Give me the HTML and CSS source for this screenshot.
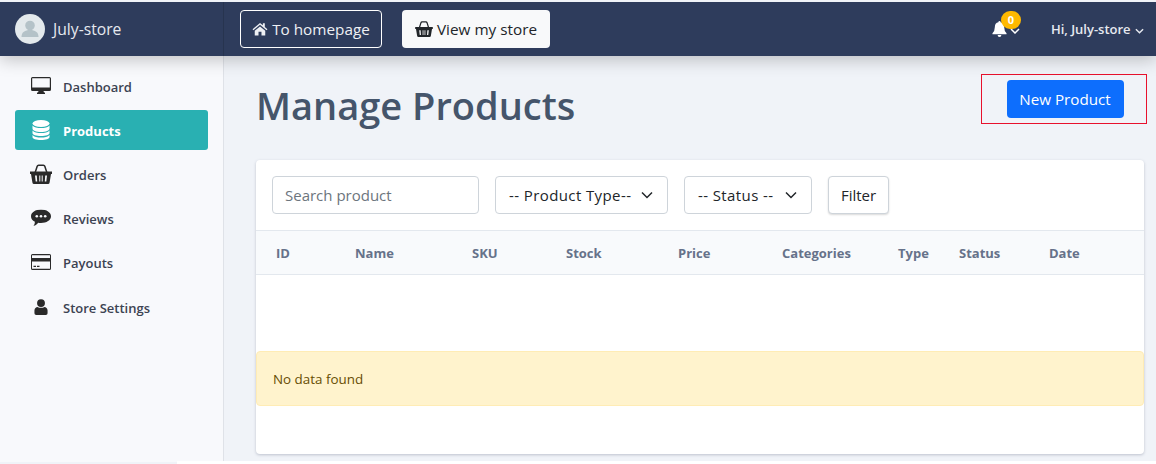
FILE: index.html
```html
<!DOCTYPE html>
<html>
<head>
    <meta http-equiv="Content-Type" content="text/html; charset=UTF-8">
    <title>Manage Products</title>
    <link rel="stylesheet" href="styles.css">
</head>

<body>

<svg class="icon-defs" width="0" height="0">
    <symbol id="i-basket" viewBox="0 0 22 20">
        <path d="M5 9 7.2 2.2Q7.5 1.2 8.6 1.2H13.4Q14.500 1.2 14.800 2.200L17 9" fill="none" stroke="currentColor" stroke-width="1.500"/>
        <path d="M0 7.500H22V10H21L19.600 18.500Q19.400 20 18 20H4Q2.600 20 2.400 18.500L1 10H0ZM5 11.500 5.700 17.500H7.200L6.800 11.500ZM9.300 11.500V17.500H10.300V11.500ZM11.700 11.500V17.500H12.700V11.500ZM15.200 11.500 14.800 17.500H16.300L17 11.500Z" fill="currentColor" fill-rule="evenodd"/>
    </symbol>
</svg>

<header id="header">
    <div class="brand">
        <span class="avatar">
            <svg viewBox="0 0 30 30" width="30" height="30"><circle cx="15" cy="11.500" r="4.800" fill="#b4c2c8"/><path d="M6.500 23c0-5 3.500-7 8.500-7s8.500 2 8.500 7z" fill="#b4c2c8"/></svg>
        </span>
        <span>July-store</span>
    </div>
    <nav class="top-nav">
        <a class="btn btn-outline" href="#">
            <svg viewBox="0 0 18 16" width="16" height="14"><path d="M9 1 0.500 8.200 1.500 9.300 9 3 16.500 9.300 17.500 8.200 14.500 5.700V1.500H12.300V3.800ZM3 10V15.500H7.300V11H10.700V15.500H15V10L9 5Z" fill="currentColor"/></svg>
            To homepage
        </a>
        <a class="btn btn-light" href="#">
            <svg width="18" height="16"><use href="#i-basket"/></svg>
            View my store
        </a>
    </nav>
    <div class="top-right">
        <span class="bell">
            <svg viewBox="0 0 16 17" width="15" height="16"><path d="M8 0Q9.200 0 9.200 1.300 13 2 13 6.500 13 10.500 15.500 13V14H0.500V13Q3 10.500 3 6.500 3 2 6.800 1.300 6.800 0 8 0ZM6 15H10Q10 17 8 17 6 17 6 15Z" fill="currentColor"/></svg>
            <svg class="chev" viewBox="0 0 10 6" width="10" height="6"><path d="M1 1 5 5 9 1" fill="none" stroke="currentColor" stroke-width="1.500"/></svg>
            <span class="badge">0</span>
        </span>
        <span class="user">Hi, July-store
            <svg class="chev" viewBox="0 0 10 6" width="9" height="6"><path d="M1 1 5 5 9 1" fill="none" stroke="currentColor" stroke-width="1.600"/></svg>
        </span>
    </div>
</header>

<div id="container">

    <aside class="sidebar">
        <a class="side-link" href="#">
            <svg viewBox="0 0 20 18" width="20" height="18"><path d="M1.500 0H18.500Q20 0 20 1.500V12.500Q20 14 18.500 14H12.500L13 15.500H14V17H6V15.500H7L7.500 14H1.500Q0 14 0 12.500V1.500Q0 0 1.500 0ZM1.200 1.200V10.500H18.800V1.200Z" fill="currentColor" fill-rule="evenodd"/></svg>
            Dashboard
        </a>
        <a class="side-link active" href="#">
            <svg viewBox="0 0 18 20" width="18" height="20"><ellipse cx="9" cy="3.500" rx="8.500" ry="3.500" fill="currentColor"/><path d="M0.500 5.500V8.500C0.500 10.500 4 12 9 12S17.500 10.500 17.500 8.500V5.500C16 7.500 12.500 8 9 8S2 7.500 0.500 5.500ZM0.500 10.500V13C0.500 15 4 16 9 16S17.500 15 17.500 13V10.500C16 12.500 12.500 13 9 13S2 12.500 0.500 10.500ZM0.500 15V17C0.500 19 4 20 9 20S17.500 19 17.500 17V15C16 17 12.500 17.500 9 17.500S2 17 0.500 15Z" fill="currentColor"/></svg>
            Products
        </a>
        <a class="side-link" href="#">
            <svg width="22" height="20"><use href="#i-basket"/></svg>
            Orders
        </a>
        <a class="side-link" href="#">
            <svg viewBox="0 0 20 17" width="20" height="17"><path d="M10 0C15.500 0 20 2.800 20 6.800S15.500 13.500 10 13.500Q8.500 13.500 7.300 13.200 5.300 15.800 2.500 16.500 4 14.500 3.900 12.300 0 10.500 0 6.800C0 2.800 4.500 0 10 0Z" fill="currentColor"/><circle cx="5.800" cy="6.800" r="1.300" fill="#f8f9fc"/><circle cx="10" cy="6.800" r="1.300" fill="#f8f9fc"/><circle cx="14.200" cy="6.800" r="1.300" fill="#f8f9fc"/></svg>
            Reviews
        </a>
        <a class="side-link" href="#">
            <svg viewBox="0 0 20 16" width="20" height="16"><path d="M1.500 0H18.500Q20 0 20 1.500V14.500Q20 16 18.500 16H1.500Q0 16 0 14.500V1.500Q0 0 1.500 0ZM1 1.200V4H19V1.200ZM1 7.500V14.800H19V7.500ZM2.500 11.800H5V13H2.500ZM6 11.800H8.500V13H6Z" fill="currentColor" fill-rule="evenodd"/></svg>
            Payouts
        </a>
        <a class="side-link settings" href="#">
            <svg viewBox="0 0 16 18" width="14" height="17"><circle cx="8" cy="4.500" r="4.500" fill="currentColor"/><path d="M0.500 16V13C0.500 10.500 2.500 9 4 9 6 10.300 10 10.300 12 9 13.500 9 15.500 10.500 15.500 13V16Q15.500 18 13.500 18H2.500Q0.500 18 0.500 16Z" fill="currentColor"/></svg>
            Store Settings
        </a>
    </aside>

    <main class="content">
        <div class="page-head">
            <h1>Manage Products</h1>
            <div class="highlight">
                <a class="btn btn-primary" href="#">New Product</a>
            </div>
        </div>

        <section class="card">
            <form class="filters">
                <input class="field search" type="text" placeholder="Search product">
                <div class="field select type-select">-- Product Type--
                    <svg viewBox="0 0 12 8" width="12" height="8"><path d="M1 1.500 6 6.500 11 1.500" fill="none" stroke="currentColor" stroke-width="1.500"/></svg>
                </div>
                <div class="field select status-select">-- Status --
                    <svg viewBox="0 0 12 8" width="12" height="8"><path d="M1 1.500 6 6.500 11 1.500" fill="none" stroke="currentColor" stroke-width="1.500"/></svg>
                </div>
                <button class="filter-btn" type="button">Filter</button>
            </form>

            <table class="products">
                <thead>
                <tr>
                    <th class="c-id">ID</th>
                    <th class="c-name">Name</th>
                    <th class="c-sku">SKU</th>
                    <th class="c-stock">Stock</th>
                    <th class="c-price">Price</th>
                    <th class="c-cat">Categories</th>
                    <th class="c-type">Type</th>
                    <th class="c-status">Status</th>
                    <th>Date</th>
                </tr>
                </thead>
            </table>

            <div class="alert">No data found</div>
        </section>
    </main>
</div>

<div class="bottom-strip"></div>

</body>

</html>
```
FILE: styles.css
```css
* {
    box-sizing: border-box;
}

body {
    margin: 0;
    padding: 0;
    height: 464px;
    overflow: hidden;
    font-family: "Open Sans", "Noto Sans", sans-serif;
    font-size: 15px;
    color: #212529;
    background: #f0f3f8;
}

a {
    text-decoration: none;
}

.icon-defs {
    position: absolute;
}

#header {
    display: flex;
    align-items: center;
    height: 56px;
    border-top: 2px solid #f0f3f8;
    background: #2e3c5c;
    color: #fff;
    position: relative;
    box-shadow: 0 4px 16px rgba(0, 0, 0, .22);
}

.brand {
    display: flex;
    align-items: center;
    gap: 8px;
    width: 224px;
    height: 100%;
    padding-left: 15px;
    border-right: 1px solid #27344f;
    font-size: 15.7px;
    color: #e6e9ef;
}

.avatar {
    display: flex;
    width: 30px;
    height: 30px;
    border-radius: 50%;
    background: #e3e9ec;
    overflow: hidden;
}

.top-nav {
    display: flex;
    gap: 20px;
    margin-left: 16px;
}

.btn {
    display: inline-flex;
    align-items: center;
    justify-content: center;
    gap: 4px;
    height: 38px;
    border-radius: 4px;
    font-size: 15.300px;
}

.btn-outline {
    width: 142px;
    border: 1px solid #fff;
    color: #eef0f4;
}

.btn-light {
    width: 148px;
    background: #f8f9fa;
    color: #212529;
}

.top-right {
    display: flex;
    align-items: center;
    margin-left: auto;
    padding-right: 12px;
    font-size: 13px;
    font-weight: 600;
    color: #e6e9ef;
}

.bell {
    display: flex;
    align-items: center;
    position: relative;
    margin-right: 31px;
    color: #fff;
}

.bell .chev {
    margin-left: 3px;
    margin-top: 4px;
}

.badge {
    position: absolute;
    top: -10px;
    left: 9px;
    width: 20px;
    height: 18px;
    border-radius: 9px;
    background: #ffb900;
    color: #fff;
    font-size: 11px;
    font-weight: 700;
    line-height: 18px;
    text-align: center;
}

.user .chev {
    margin-left: 1px;
}

#container {
    display: flex;
    height: 406px;
}

.sidebar {
    width: 224px;
    flex: none;
    padding: 10px 15px 0;
    background: #f8f9fc;
    border-right: 1px solid #dfe2e8;
}

.side-link {
    display: flex;
    align-items: center;
    height: 40px;
    margin-bottom: 4px;
    padding: 2px 0 0 48px;
    position: relative;
    border-radius: 3px;
    font-size: 13px;
    font-weight: 600;
    color: #3c4352;
}

.side-link svg {
    position: absolute;
    left: 26px;
    top: 50%;
    transform: translate(-50%, -50%);
    color: #2a2a2a;
}

.side-link.active {
    background: #29b0b2;
    color: #fff;
    font-weight: 700;
}

.side-link.active svg {
    color: #fff;
}

.side-link.settings {
    margin-top: 5px;
}

.content {
    flex: 1;
    padding: 18px 12px 0 32px;
}

.page-head {
    display: flex;
    align-items: center;
    justify-content: space-between;
    height: 50px;
    margin-bottom: 36px;
}

.page-head h1 {
    margin: 12px 0 0;
    font-size: 38px;
    font-weight: 600;
    color: #45556b;
}

.highlight {
    display: flex;
    align-items: center;
    justify-content: center;
    width: 166px;
    height: 50px;
    margin-right: -3px;
    padding-left: 2px;
    border: 1px solid #e8112d;
}

.btn-primary {
    width: 117px;
    background: #0d6efd;
    color: #fff;
    font-size: 15.200px;
}

.card {
    height: 294px;
    background: #fff;
    border-radius: 4px;
    box-shadow: 0 1px 3px rgba(60, 70, 100, .28);
}

.filters {
    display: flex;
    gap: 16px;
    height: 70px;
    padding: 16px 16px 0;
}

.field {
    height: 38px;
    border: 1px solid #ced4da;
    border-radius: 4px;
    background: #fff;
    font-family: inherit;
    font-size: 15px;
    color: #212529;
}

.search {
    width: 207px;
    padding: 0 12px;
}

.search::placeholder {
    color: #6c757d;
}

.select {
    display: flex;
    align-items: center;
    justify-content: space-between;
    padding: 0 14px 0 13px;
    letter-spacing: .4px;
}

.type-select {
    width: 173px;
}

.status-select {
    width: 128px;
}

.filter-btn {
    width: 61px;
    height: 38px;
    border: 1px solid #ced4da;
    border-radius: 4px;
    background: #fff;
    box-shadow: 0 1px 2px rgba(0, 0, 0, .15);
    font-family: inherit;
    font-size: 15px;
    color: #212529;
}

.products {
    width: 100%;
    border-collapse: collapse;
    table-layout: fixed;
}

.products th {
    height: 44px;
    padding: 0 0 0 21px;
    border-top: 1px solid #e3e8ee;
    border-bottom: 1px solid #e3e8ee;
    background: #f8fafc;
    font-size: 13px;
    font-weight: 700;
    text-align: left;
    color: #66728a;
}

.products th.c-id { padding-left: 20px; }

.c-id { width: 78px; }
.c-name { width: 117px; }
.c-sku { width: 94px; }
.c-stock { width: 112px; }
.c-price { width: 104px; }
.c-cat { width: 116px; }
.c-type { width: 61px; }
.c-status { width: 90px; }

.alert {
    display: flex;
    align-items: center;
    height: 55px;
    margin-top: 76px;
    padding-left: 16px;
    background: #fff3cd;
    border: 1px solid #ffecb5;
    border-radius: 4px;
    font-size: 13.400px;
    color: #664d03;
}

/* white edge at the bottom of the capture */
.bottom-strip {
    position: absolute;
    left: 177px;
    right: 0;
    top: 461px;
    height: 3px;
    background: #fff;
}
```
